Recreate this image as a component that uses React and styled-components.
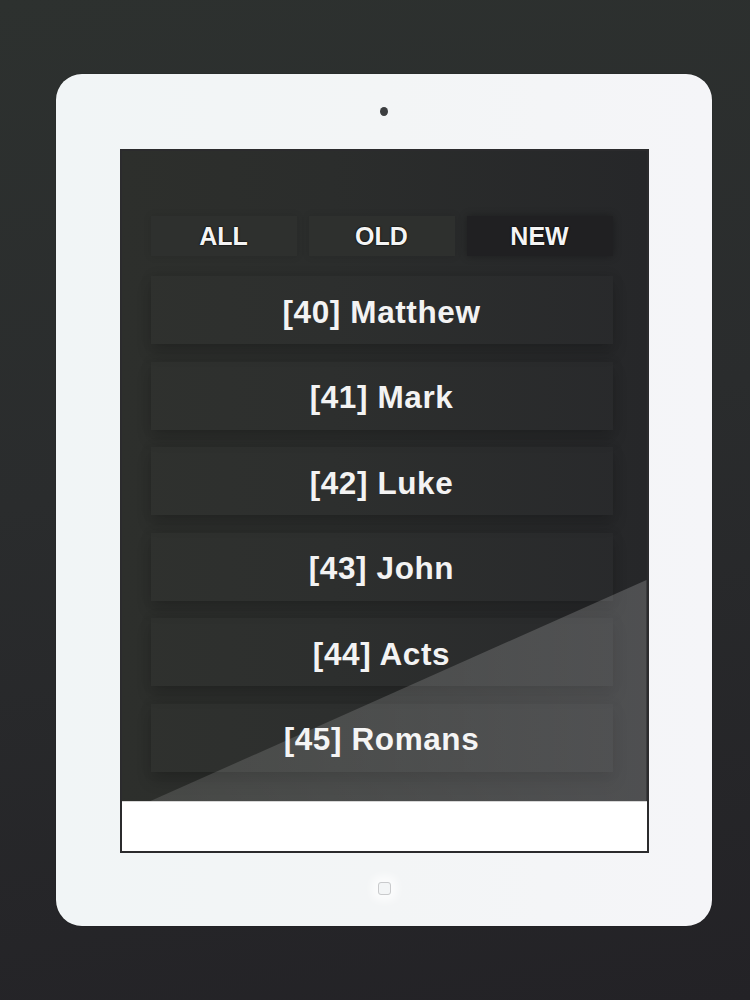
import React, { useState } from "react";
import styled, { createGlobalStyle } from "styled-components";

const GlobalStyle = createGlobalStyle`
  html, body {
    margin: 0;
    padding: 0;
  }
  body {
    font-family: "Liberation Sans", Arial, sans-serif;
    background: #262729;
  }
`;

const Page = styled.div`
  width: 750px;
  height: 1000px;
  box-sizing: border-box;
  padding-top: 74px;
  padding-left: 56px;
  background: linear-gradient(170deg, #2d312f 0%, #2a2c2d 45%, #232226 100%);
  overflow: hidden;
`;

const Device = styled.div`
  width: 656px;
  height: 852px;
  box-sizing: border-box;
  border-radius: 26px;
  background: linear-gradient(90deg, #f1f5f6 0%, #f3f5f6 50%, #f5f5f8 100%);
  box-shadow: 0 0 1px rgba(0, 0, 0, 0.6);
  display: flex;
  flex-direction: column;
  align-items: center;
  padding-top: 33px;
`;

const Camera = styled.div`
  width: 8px;
  height: 9px;
  border-radius: 50%;
  background: #3c3e40;
`;

const Screen = styled.div`
  position: relative;
  margin-top: 33px;
  width: 529px;
  height: 704px;
  box-sizing: border-box;
  border: 2px solid #2b2b2d;
  display: flex;
  flex-direction: column;
  overflow: hidden;
`;

const Content = styled.div`
  position: relative;
  flex: 1;
  background: linear-gradient(90deg, #2d2f2c 0%, #2b2d2c 40%, #262729 100%);
  padding: 65px 34px 0 29px;
  overflow: hidden;
`;

const Tabs = styled.div`
  display: grid;
  grid-template-columns: repeat(3, 1fr);
  gap: 12px;
  height: 40px;
`;

const Tab = styled.button`
  border: none;
  margin: 0;
  padding: 0;
  height: 40px;
  background: ${(p) => (p.$active ? "#202022" : "#2e302e")};
  box-shadow: ${(p) => (p.$active ? "0 0 8px rgba(0,0,0,0.3)" : "0 0 8px rgba(0,0,0,0.1)")};
  color: #f4f4f4;
  font-family: "Liberation Sans", Arial, sans-serif;
  font-weight: 700;
  font-size: 25px;
  text-shadow: 0 0 2px #000, 0 0 1px #000;
  cursor: pointer;
`;

const List = styled.div`
  margin-top: 20px;
  display: flex;
  flex-direction: column;
  gap: 17.5px;
`;

const Row = styled.div`
  height: 68px;
  padding-top: 4px;
  box-sizing: border-box;
  display: flex;
  align-items: center;
  justify-content: center;
  background: rgba(255, 255, 255, 0.012);
  box-shadow: 0 0 12px rgba(0, 0, 0, 0.08), 0 9px 14px rgba(0, 0, 0, 0.16);
  color: #f3f3f3;
  font-size: 31.5px;
  font-weight: 700;
  letter-spacing: 0.6px;
`;

const Glare = styled.div`
  position: absolute;
  left: 0;
  top: 0;
  right: 0;
  bottom: 0;
  pointer-events: none;
  clip-path: polygon(100% 429px, 100% 100%, 29px 100%);
  background: linear-gradient(90deg, rgba(255, 255, 255, 0.12) 0%, rgba(255, 255, 255, 0.16) 60%, rgba(255, 255, 255, 0.19) 100%);
`;

const BottomBar = styled.div`
  height: 49px;
  flex: none;
  background: #ffffff;
  border-top: 1px solid #d6d6d6;
`;

const HomeButton = styled.div`
  margin-top: 29px;
  width: 11px;
  height: 11px;
  border-radius: 3px;
  border: 1.5px solid #c9cacc;
  box-shadow: 0 0 8px 6px rgba(255, 255, 255, 0.7);
`;

const books = [
  [40, "Matthew"],
  [41, "Mark"],
  [42, "Luke"],
  [43, "John"],
  [44, "Acts"],
  [45, "Romans"],
];

const App = () => {
  const [filter, setFilter] = useState("NEW");

  return (
    <>
      <GlobalStyle />
      <Page>
        <Device>
          <Camera />
          <Screen>
            <Content>
              <Tabs>
                {["ALL", "OLD", "NEW"].map((t) => (
                  <Tab key={t} $active={filter === t} onClick={() => setFilter(t)}>
                    {t}
                  </Tab>
                ))}
              </Tabs>
              <List>
                {books.map(([num, name]) => (
                  <Row key={num}>
                    [{num}] {name}
                  </Row>
                ))}
              </List>
              <Glare />
            </Content>
            <BottomBar />
          </Screen>
          <HomeButton />
        </Device>
      </Page>
    </>
  );
};

export default App;
